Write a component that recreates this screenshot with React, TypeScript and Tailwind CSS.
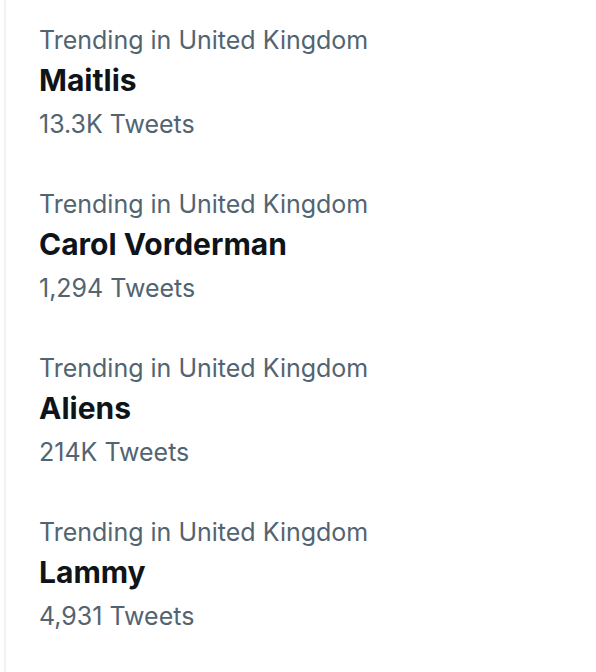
import React from 'react';

interface Trend {
  id: string;
  context: string;
  topic: string;
  count: string;
}

const trends: Trend[] = [
  { id: 'maitlis', context: 'Trending in United Kingdom', topic: 'Maitlis', count: '13.3K Tweets' },
  { id: 'vorderman', context: 'Trending in United Kingdom', topic: 'Carol Vorderman', count: '1,294 Tweets' },
  { id: 'aliens', context: 'Trending in United Kingdom', topic: 'Aliens', count: '214K Tweets' },
  { id: 'lammy', context: 'Trending in United Kingdom', topic: 'Lammy', count: '4,931 Tweets' }
];

const TrendRow: React.FC<{ trend: Trend }> = ({ trend }) => (
  <div className="px-[33px] pt-[24px] pb-[24px]">
    <div className="text-[25px] leading-[32px] text-[#536471]">{trend.context}</div>
    <div className="mt-[4px] text-[30px] leading-[40px] font-bold text-[#0f1419]">{trend.topic}</div>
    <div className="mt-[8px] text-[25px] leading-[32px] text-[#536471]">{trend.count}</div>
  </div>
);

export default function App() {
  return (
    <div
      className="min-h-[672px] w-[596px] bg-white pl-[4px]"
      style={{ fontFamily: 'Inter, "Noto Sans", sans-serif' }}
    >
      <div className="min-h-[672px] border-l-2 border-[#eff3f4]">
        {trends.map((trend) => (
          <TrendRow key={trend.id} trend={trend} />
        ))}
      </div>
    </div>
  );
}
